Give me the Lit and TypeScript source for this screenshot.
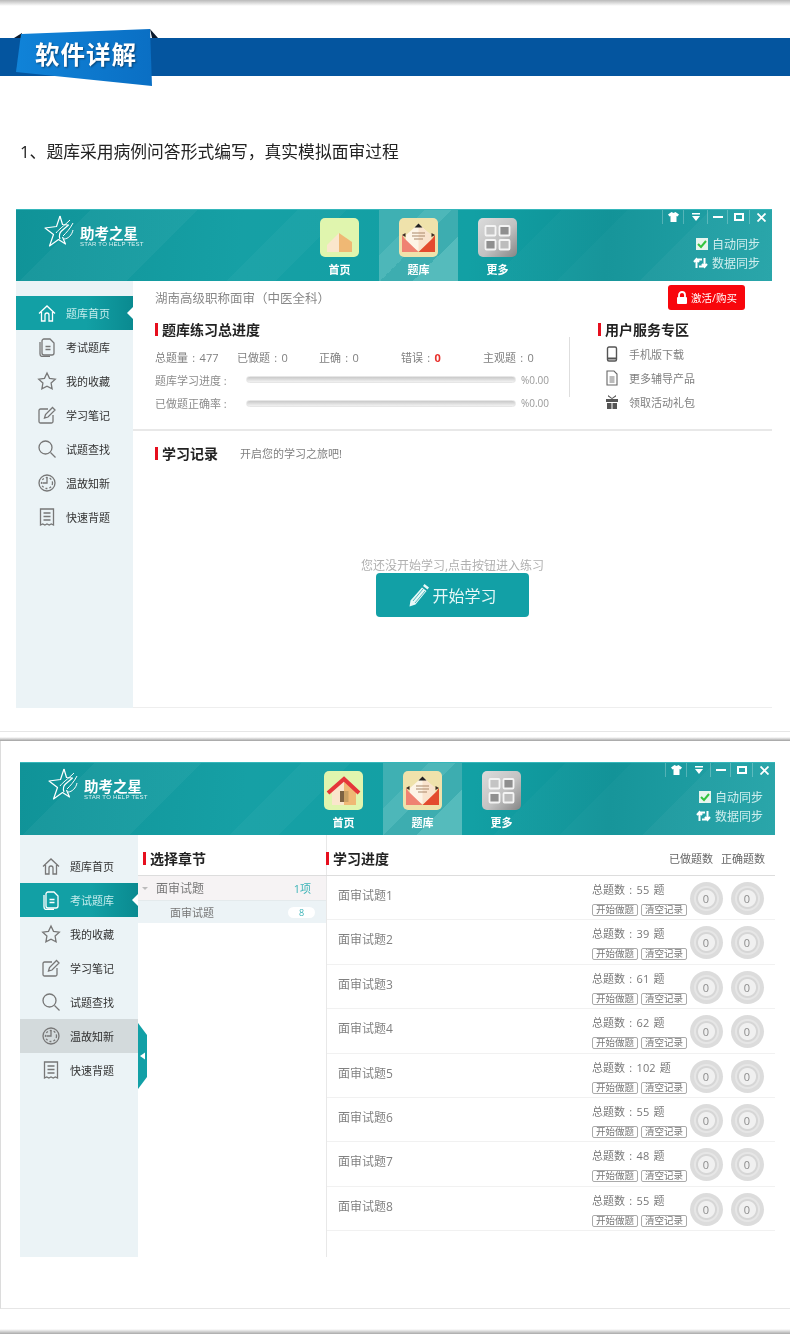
import { LitElement, html, css, svg } from "lit";
import { customElement } from "lit/decorators.js";

const navIcons: Record<string, any> = {
  home: svg`<path d="M2 10.500 10 3l8 7.500M4.500 9v9h3.500v-6a2 2 0 0 1 4 0v6h3.500V9"/>`,
  paper: svg`<path d="M7 2h6l4 4v10a2 2 0 0 1-2 2H7a2 2 0 0 1-2-2V4a2 2 0 0 1 2-2Z"/><path d="M3 5v12a2.500 2.500 0 0 0 2.500 2.500H13M8.500 9.500h5M8.500 12.500h5"/>`,
  star: svg`<path d="m10 2 2.500 5.300 5.800.8-4.200 4 1 5.800L10 15.200 4.900 17.900l1-5.800-4.200-4 5.800-.8Z"/>`,
  note: svg`<path d="M16 10v6.500a1.500 1.500 0 0 1-1.500 1.500h-11A1.500 1.500 0 0 1 2 16.500v-11A1.500 1.500 0 0 1 3.500 4H11M7.500 13l1-3.500L15.500 2.500l2.500 2.500-7 7Z"/>`,
  search: svg`<circle cx="8.500" cy="8.500" r="6.500"/><path d="m13.500 13.500 5 5"/>`,
  clock: svg`<circle cx="10" cy="10" r="8"/><circle cx="10" cy="10" r="5.500" stroke-dasharray="2 2"/><path d="M10 4.500V10H5.500"/>`,
  list: svg`<path d="M3.500 2h13v16l-2.200-1-2.100 1-2.200-1-2.100 1-2.200-1-2.200 1ZM6.500 6h7M6.500 9.500h7M6.500 13h7"/>`,
};

const NAV = [
  { icon: "home", label: "题库首页" },
  { icon: "paper", label: "考试题库" },
  { icon: "star", label: "我的收藏" },
  { icon: "note", label: "学习笔记" },
  { icon: "search", label: "试题查找" },
  { icon: "clock", label: "温故知新" },
  { icon: "list", label: "快速背题" },
];

const CHAPTERS = [
  { name: "面审试题1", total: 55 },
  { name: "面审试题2", total: 39 },
  { name: "面审试题3", total: 61 },
  { name: "面审试题4", total: 62 },
  { name: "面审试题5", total: 102 },
  { name: "面审试题6", total: 55 },
  { name: "面审试题7", total: 48 },
  { name: "面审试题8", total: 55 },
];

@customElement("app-root")
export class AppRoot extends LitElement {
  static styles = css`
    :host {
      display: block;
      width: 790px;
      height: 1334px;
      overflow: hidden;
      background: #fff;
      font-family: "Open Sans", "Noto Sans CJK SC", sans-serif;
      color: #777;
      filter: blur(0.35px);
    }
    .edge-top { height: 6px; background: linear-gradient(#b9b9b9, #fff); }
    .banner { position: relative; height: 38px; margin-top: 32px; background: #04559f; }
    .ribbon { position: absolute; left: 0; top: -9px; }
    .ribbon-text {
      position: absolute; left: 35px; top: 0; line-height: 33px;
      font-size: 24.500px; font-weight: 700; color: #fff; letter-spacing: 1px;
      text-shadow: 1px 1px 2px rgba(0,0,0,.45);
    }
    .lead { margin: 64px 0 45px 20px; font-size: 16.800px; line-height: 23px; height: 24px; color: #222; }
    .panel-one { height: 522px; border-bottom: 1px solid #e6e6e6; }
    .gap { height: 9px; background: linear-gradient(#fff 0, #fff 5px, #a0a0a0 9px); }
    .panel-two { height: 568px; padding-top: 21px; box-sizing: border-box; border-left: 1px solid #dcdcdc; border-bottom: 1px solid #e6e6e6; }
    .edge-bottom { height: 5px; margin-top: 20px; background: linear-gradient(#fff, #a9a9a9); }

    .win { display: grid; grid-template-rows: auto 1fr; }
    .win-a { width: 756px; height: 499px; margin-left: 16px; --side: 117px; --head: 72px; }
    .win-b { width: 755px; height: 495px; margin-left: 19px; --side: 118px; --head: 73px; }

    .head {
      height: var(--head); display: flex; color: #fff;
      background:
        linear-gradient(135deg, transparent 0 9%, rgba(255,255,255,.04) 9% 22%, transparent 22% 34%, rgba(255,255,255,.03) 34% 40%, transparent 40%),
        linear-gradient(135deg, transparent 0 66%, rgba(255,255,255,.02) 66% 74%, rgba(255,255,255,.04) 74% 84%, rgba(255,255,255,.07) 84%),
        linear-gradient(95deg, #109398, #16a0a5 30%, #12a0a4 60%, #0e9196 78%, #1a9fa4);
      border-top: 1px solid #35b7bb;
      box-sizing: border-box;
    }
    .logo { width: 284px; box-sizing: border-box; padding: 5px 0 0 28px; display: flex; gap: 5px; }
    .logo-name { font: 700 14.500px/16px "Noto Sans CJK SC", sans-serif; margin-top: 10px; white-space: nowrap; }
    .logo-sub { font: 6px/7px "Liberation Sans", sans-serif; letter-spacing: .25px; opacity: .85; white-space: nowrap; }
    .tab { width: 79px; text-align: center; box-sizing: border-box; padding-top: 8px; }
    .tab.on { background: linear-gradient(135deg, #3fb0b3 0 30%, #4db7b9 30% 48%, #3dadb0 48% 70%, #55bbbc 70%); }
    .tile { display: block; margin: 0 auto; }
    .tab-label { font-size: 11px; font-weight: 700; line-height: 14px; margin-top: 6px; }
    .tools { flex: 1; display: flex; flex-direction: column; align-items: flex-end; }
    .ctrls { display: grid; grid-template-columns: 21px 24px 20px 22px 23px; height: 14px; margin-bottom: 10px; }
    .ctrl { height: 14px; display: flex; align-items: center; justify-content: center; border-left: 1px solid rgba(255,255,255,.25); box-sizing: border-box; }
    .sync { display: flex; align-items: center; gap: 4px; height: 19px; padding-right: 12px; font-size: 12px; color: #cfeeee; }

    .body { display: grid; grid-template-columns: var(--side) 1fr; min-height: 0; }
    .side { background: #ebf3f6; padding-top: 15px; position: relative; }
    .win-b .side { padding-top: 14px; }
    .row { position: relative; display: flex; align-items: center; height: 34px; padding-left: 21px; gap: 9px; font-size: 11px; color: #333; }
    .row svg { fill: none; stroke: #777; stroke-width: 1.300; }
    .row.on { background: linear-gradient(90deg, #12a0a5 60%, #0a8a90); color: #c4ecec; }
    .row.on svg { stroke: #fff; }
    .row.on::after {
      content: ""; position: absolute; right: 0; top: 11px;
      border: 6px solid transparent; border-right-color: #fff; border-left-width: 0;
    }
    .row.hover { background: #d3dadc; }
    .flap { position: absolute; left: 100%; top: 188px; }

    .main-a { display: flex; flex-direction: column; padding-left: 22px; min-height: 0; }
    .top { display: flex; justify-content: space-between; align-items: center; height: 25px; margin-top: 4px; padding-right: 27px; font-size: 12.500px; color: #888; }
    .buy {
      display: flex; align-items: center; justify-content: center; gap: 3px; width: 77px; height: 25px;
      background: #f8060c; border-radius: 3px; font-size: 10.500px; color: #fff;
    }
    .stats-wrap { display: grid; grid-template-columns: 414px 1px 1fr; margin: 9px 0 0 -22px; padding: 0 0 14px 22px; border-bottom: 2px solid #e8e8e8; }
    .sec { display: flex; align-items: center; gap: 4px; height: 20px; font-size: 14px; font-weight: 700; color: #222; white-space: nowrap; }
    .sec::before { content: ""; width: 3px; height: 13px; background: #e60f1e; }
    .stats { display: grid; grid-template-columns: repeat(5, 82px); height: 16px; margin: 11px 0 2px; font-size: 11px; line-height: 16px; color: #808080; word-spacing: 1.500px; }
    .stats b { color: #e8302c; }
    .prog { display: grid; grid-template-columns: 91px 270px auto; align-items: center; height: 23.500px; font-size: 11px; color: #8c8c8c; }
    .prog-track { height: 7px; border-radius: 4px; background: linear-gradient(#c9c9c9, #f2f2f2); border: 1px solid #e6e6e6; box-sizing: border-box; }
    .prog-val { padding-left: 5px; font-size: 10px; color: #999; }
    .vline { background: #dedede; height: 60px; margin-top: 18px; }
    .service { padding-left: 28px; }
    .service ul { list-style: none; margin: 3px 0 0; padding: 0; }
    .service li { display: flex; align-items: center; height: 24px; padding-left: 7px; gap: 10px; font-size: 11px; color: #808080; }
    .service svg { flex: none; }
    .record { display: flex; gap: 22px; align-items: center; height: 20px; margin-top: 12px; font-size: 11px; color: #808080; }
    .empty { text-align: center; margin: 96px 0 0 -22px; font-size: 12px; line-height: 14px; color: #b0b0b0; }
    .start {
      display: flex; align-items: center; justify-content: center; gap: 2px; width: 153px; height: 44px;
      margin: 0 0 0 221px; background: #12a0a6; border-radius: 4px; color: #e8f8f8; font-size: 16px;
    }
    .rest { flex: 1; border-bottom: 1px solid #eee; margin-left: -22px; }

    .main-b { display: grid; grid-template-columns: 188px 1fr; min-height: 0; }
    .col-head { display: flex; align-items: flex-start; height: 41px; box-sizing: border-box; padding: 13px 10px 0 5px; border-bottom: 1px solid #ddd; }
    .col-head .counts { margin-left: auto; display: flex; gap: 8px; height: 20px; align-items: center; font-size: 11px; color: #666; }
    .tree-a { display: flex; align-items: center; height: 25px; padding: 0 15px 0 4px; background: #f6f3f4; font-size: 12px; color: #777; border-bottom: 1px solid #e4eaec; box-sizing: border-box; }
    .tree-a .tri { border: 3.500px solid transparent; border-top-color: #bbb; border-bottom-width: 0; margin-right: 8px; }
    .tree-a .n { margin-left: auto; color: #3db4b8; font-size: 11px; }
    .tree-b { display: flex; align-items: center; height: 22px; padding: 0 11px 0 32px; background: #ecf3f6; font-size: 11px; color: #777; }
    .pill { margin-left: auto; width: 27px; height: 11px; border-radius: 6px; background: #fff; color: #3db4b8; font-size: 9px; line-height: 11px; text-align: center; }
    .col-progress { border-left: 1px solid #e8e8e8; }
    .col-progress .col-head { padding-left: 0; margin-left: -1px; }
    .chapter { display: flex; height: 44.400px; box-sizing: border-box; padding: 6px 11.500px 0 11px; border-bottom: 1px solid #f1f1f1; font-size: 12px; color: #808080; }
    .chapter-name { flex: 1; line-height: 16px; margin-top: 6px; }
    .info { width: 95px; margin-right: 2.500px; }
    .total { font-size: 11px; line-height: 16px; color: #777; white-space: nowrap; word-spacing: 1.500px; }
    .btns { display: flex; gap: 3px; margin-top: 6px; }
    .btn { width: 46px; height: 12px; box-sizing: border-box; border: 1px solid #aaa; border-radius: 2px; font-size: 9.500px; line-height: 10px; text-align: center; color: #777; overflow: hidden; }
    .rings { display: flex; gap: 8px; }
    .ring {
      width: 33px; height: 33px; border-radius: 50%; display: flex; align-items: center; justify-content: center;
      background: radial-gradient(circle, #f0f0f0 0 8px, #d6d6d6 9px 10px, #e6e6e6 11px 12px, #dcdcdc 13px);
      font-size: 11px; color: #8c8c8c;
    }
  `;

  tile(kind: string, roof: boolean) {
    if (kind === "home") {
      return html`<svg class="tile" width="39" height="39" viewBox="0 0 39 39">
        <rect width="39" height="39" rx="5" fill="#e0f5ae"/>
        ${roof
          ? svg`<path d="M8 20 20 9v25H8Z" fill="#fae6cc"/><path d="M20 9 32 20v14H20Z" fill="#efb874"/>
              <path d="M16 20h8v11h-8Z" fill="#7d6242"/><path d="M20 20h4.500v11H20Z" fill="#caa063"/>
              <path d="M4 22 20 8l15 14" fill="none" stroke="#e5363a" stroke-width="4"/>`
          : svg`<path d="M7 27 19 15v19H7Z" fill="#fae6cc"/><path d="M19 15 32 24v10H19Z" fill="#efb874"/>`}
      </svg>`;
    }
    if (kind === "mail") {
      return html`<svg class="tile" width="39" height="39" viewBox="0 0 39 39">
        <rect width="39" height="39" rx="5" fill="#efe2ab"/>
        <path d="M7 17 19.500 6 32 17v9l-12.500 7L7 26Z" fill="#fdf4e6"/>
        <path d="M19.500 6 32 17v9l-12.500 7Z" fill="#f9e3cd"/>
        <path d="M13 15h13M13 18h13M15 21h9" stroke="#a9876b" stroke-width="1.100"/>
        <path d="m15.500 9.500 4-4 4 4Z" fill="#222"/>
        <path d="M3 17v17h16.500L6 21Z" fill="#ef8272"/><path d="M36 17v17H19.500L33 21Z" fill="#e34b2e"/>
        <path d="M3 17l3.500-2v4ZM36 17l-3.500-2v4Z" fill="#3a2a22"/>
      </svg>`;
    }
    return html`<svg class="tile" width="39" height="39" viewBox="0 0 39 39">
      <defs><linearGradient id="more" x1="0" y1="0" x2="1" y2="1"><stop offset="0" stop-color="#dcdcdc"/><stop offset=".55" stop-color="#c2c2c2"/><stop offset="1" stop-color="#858585"/></linearGradient></defs>
      <rect width="39" height="39" rx="5" fill="url(#more)"/>
      <g stroke="#f4f4f4" stroke-width="1.800">
        <rect x="7.500" y="8" width="10" height="9.500" rx="1" fill="#c4c4c4"/><rect x="21.500" y="8" width="10" height="9.500" rx="1" fill="#8f8f8f"/>
        <rect x="7.500" y="22" width="10" height="9.500" rx="1" fill="#8f8f8f"/><rect x="21.500" y="22" width="10" height="9.500" rx="1" fill="#bcbcbc"/>
      </g>
    </svg>`;
  }

  header(roof: boolean) {
    return html`<div class="head">
      <div class="logo">
        <svg width="31" height="33" viewBox="0 0 31 33" fill="none" stroke="#fff" stroke-width="1.200" stroke-linejoin="round">
          <path d="M16 1 12.500 11.500 1 13l8.500 6.500L5.500 31l9-6.500 7 4.500-3-7"/>
          <path d="M16 1l2.500 8.500 6 .5-7 6c-2 2-3 4-1.500 8"/>
          <path d="M12 18c2-3 9-8 14-13M19 21c3-3 7-7 10-13M20 24c4 0 8-4 9-9" stroke-width="1"/>
        </svg>
        <div><div class="logo-name">助考之星</div><div class="logo-sub">STAR TO HELP TEST</div></div>
      </div>
      <div class="tab">${this.tile("home", roof)}<div class="tab-label">首页</div></div>
      <div class="tab on">${this.tile("mail", roof)}<div class="tab-label">题库</div></div>
      <div class="tab">${this.tile("more", roof)}<div class="tab-label">更多</div></div>
      <div class="tools">
        <div class="ctrls">
          <div class="ctrl"><svg width="11" height="10" viewBox="0 0 11 10" fill="#fff"><path d="M3.500 0 5.500 1 7.500 0 11 2.500 9.500 4.500 8.500 4v6h-6V4l-1 .5L0 2.500Z"/></svg></div>
          <div class="ctrl"><svg width="10" height="8" viewBox="0 0 10 8" fill="#fff"><path d="M1 0h8v1.500H1ZM1 3h8L5 8Z"/></svg></div>
          <div class="ctrl"><svg width="10" height="2" viewBox="0 0 10 2" fill="#fff"><path d="M0 0h10v2H0Z"/></svg></div>
          <div class="ctrl"><svg width="10" height="8" viewBox="0 0 10 8" fill="none" stroke="#fff" stroke-width="2"><rect x="1" y="1" width="8" height="6"/></svg></div>
          <div class="ctrl"><svg width="9" height="9" viewBox="0 0 9 9" stroke="#fff" stroke-width="1.800"><path d="m.5.5 8 8M8.500.5l-8 8"/></svg></div>
        </div>
        <div class="sync">
          <svg width="12" height="12" viewBox="0 0 12 12"><rect width="12" height="12" fill="#e8f5ee"/><path d="m2 6 3 3 5-6" fill="none" stroke="#35c43f" stroke-width="2"/></svg>
          <span>自动同步</span>
        </div>
        <div class="sync">
          <svg width="15" height="12" viewBox="0 0 15 12" fill="none" stroke="#fff" stroke-width="2"><path d="M3.500 11V2.500H9M1 5l2.500-3L6 5M11.500 1v8.500H6M9 7l2.500 3L14 7"/></svg>
          <span>数据同步</span>
        </div>
      </div>
    </div>`;
  }

  sidebar(active: number, hover: number, flap: boolean) {
    return html`<aside class="side">
      ${NAV.map((n, i) => html`<div class="row ${i === active ? "on" : ""} ${i === hover ? "hover" : ""}">
        <svg width="20" height="20" viewBox="0 0 20 20">${navIcons[n.icon]}</svg><span>${n.label}</span>
      </div>`)}
      ${flap
        ? html`<svg class="flap" width="9" height="66" viewBox="0 0 9 66">
            <path d="M0 0 9 12v42L0 66Z" fill="#12a0a6"/><path d="M2 33 7 29.500v7Z" fill="#fff"/>
          </svg>`
        : ""}
    </aside>`;
  }

  firstMain() {
    return html`<div class="main-a">
      <div class="top">
        <span>湖南高级职称面审（中医全科）</span>
        <div class="buy">
          <svg width="12" height="13" viewBox="0 0 12 13"><path d="M3 6V4a3 3 0 0 1 6 0v2" fill="none" stroke="#fff" stroke-width="1.800"/><rect x="1" y="6" width="10" height="7" rx="1" fill="#fff"/></svg>
          激活/购买
        </div>
      </div>
      <div class="stats-wrap">
        <div>
          <div class="sec">题库练习总进度</div>
          <div class="stats">
            <span>总题量 : 477</span><span>已做题 : 0</span><span>正确 : 0</span><span>错误 : <b>0</b></span><span>主观题 : 0</span>
          </div>
          <div class="prog"><span>题库学习进度 :</span><div class="prog-track"></div><span class="prog-val">%0.00</span></div>
          <div class="prog"><span>已做题正确率 :</span><div class="prog-track"></div><span class="prog-val">%0.00</span></div>
        </div>
        <div class="vline"></div>
        <div class="service">
          <div class="sec">用户服务专区</div>
          <ul>
            <li><svg width="14" height="16" viewBox="0 0 14 16" fill="none" stroke="#555" stroke-width="1.400"><rect x="2.500" y="1" width="9" height="14" rx="1.500"/><path d="M3 12.500h8" stroke-width="2"/></svg>手机版下载</li>
            <li><svg width="14" height="16" viewBox="0 0 14 16" fill="none" stroke="#666" stroke-width="1.100"><path d="M2 1h7l3 3v11H2Z"/><path d="M4.500 6h5v7h-5Z" fill="#bbb" stroke="none"/></svg>更多辅导产品</li>
            <li><svg width="14" height="16" viewBox="0 0 14 16" fill="#555"><path d="M1 5h12v3H1ZM2 9h4.500v6H2ZM7.500 9H12v6H7.500ZM3 1l4 3 4-3v1.500L7 5 3 2.500Z"/></svg>领取活动礼包</li>
          </ul>
        </div>
      </div>
      <div class="record"><div class="sec">学习记录</div><span>开启您的学习之旅吧!</span></div>
      <div class="empty">您还没开始学习,点击按钮进入练习</div>
      <div class="start">
        <svg width="22" height="24" viewBox="0 0 22 24"><path d="M16.500 1 21 4.500 19.500 6.500 15 3ZM14 4.500 18.500 8 7.500 21.500 1.500 23.500 2.500 17.500Z" fill="#e8f8f8"/><path d="M5 18 15 6M7 20 17 8" stroke="#12a0a6" stroke-width=".7"/></svg>
        开始学习
      </div>
      <div class="rest"></div>
    </div>`;
  }

  secondMain() {
    return html`<div class="main-b">
      <div>
        <div class="col-head"><div class="sec">选择章节</div></div>
        <div class="tree-a"><span class="tri"></span>面审试题<span class="n">1项</span></div>
        <div class="tree-b">面审试题<span class="pill">8</span></div>
      </div>
      <div class="col-progress">
        <div class="col-head">
          <div class="sec">学习进度</div>
          <div class="counts"><span>已做题数</span><span>正确题数</span></div>
        </div>
        ${CHAPTERS.map(c => html`<div class="chapter">
          <div class="chapter-name">${c.name}</div>
          <div class="info">
            <div class="total">总题数 : ${c.total} 题</div>
            <div class="btns"><div class="btn">开始做题</div><div class="btn">清空记录</div></div>
          </div>
          <div class="rings"><div class="ring">0</div><div class="ring">0</div></div>
        </div>`)}
      </div>
    </div>`;
  }

  render() {
    return html`
      <div class="edge-top"></div>
      <div class="banner">
        <svg class="ribbon" width="165" height="60" viewBox="0 0 165 60">
          <defs><linearGradient id="rib" x1="0" y1="0" x2="1" y2="0"><stop offset="0" stop-color="#1083d8"/><stop offset="1" stop-color="#0a6fc4"/></linearGradient></defs>
          <path d="m14 9 8-5v5ZM150 0l8 9h-6Z" fill="#0b1a2c"/>
          <path d="M21 5 150 0 152 57 16 43Z" fill="url(#rib)"/>
        </svg>
        <div class="ribbon-text">软件详解</div>
      </div>
      <div class="lead">1、题库采用病例问答形式编写，真实模拟面审过程</div>
      <div class="panel-one">
        <div class="win win-a">
          ${this.header(false)}
          <div class="body">${this.sidebar(0, -1, false)}${this.firstMain()}</div>
        </div>
      </div>
      <div class="gap"></div>
      <div class="panel-two">
        <div class="win win-b">
          ${this.header(true)}
          <div class="body">${this.sidebar(1, 5, true)}${this.secondMain()}</div>
        </div>
      </div>
      <div class="edge-bottom"></div>
    `;
  }
}
